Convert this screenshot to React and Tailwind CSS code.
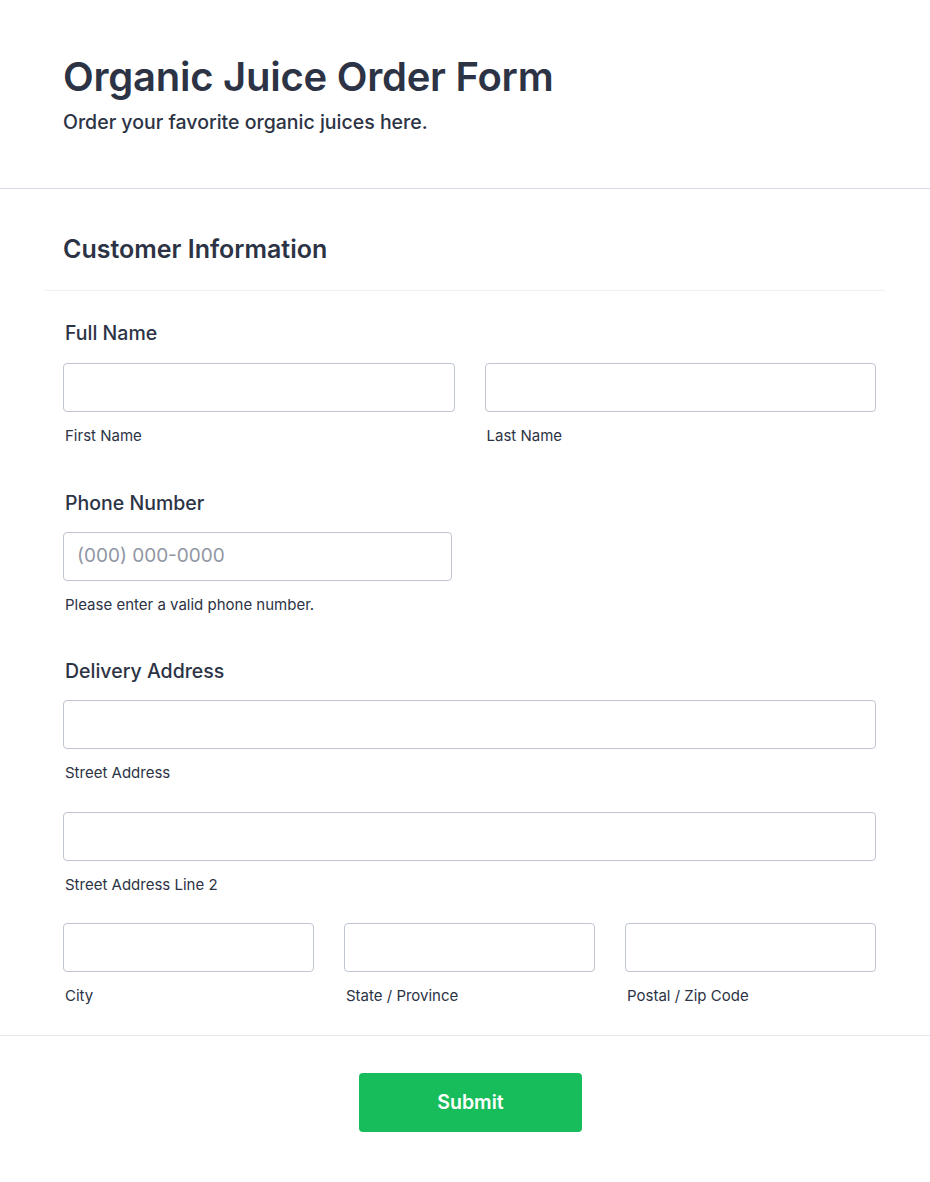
export default function App() {
  const font = { fontFamily: "Inter, 'Noto Sans', sans-serif" };
  const inputCls = "h-[49px] w-full rounded-[4px] border border-[#bfc5d3] bg-white";
  const sub = "mt-[15px] pl-[2px] text-[15px] leading-[18px] text-[#2c3345]";
  const label = "pl-[2px] text-[19.5px] font-medium leading-[22px] text-[#2c3345]";
  return (
    <div className="min-h-[1182px] w-[930px] bg-white" style={font}>
      <header className="border-b border-[#d8dae5] px-[63px] pb-[54px] pt-[53px]">
        <h1 className="text-[40px] font-semibold leading-[48px] tracking-[-0.25px] text-[#2c3345]">Organic Juice Order Form</h1>
        <p className="mt-[9px] text-[19.5px] font-medium leading-[24px] text-[#2c3345]">Order your favorite organic juices here.</p>
      </header>
      <section className="px-[45px]">
        <div className="border-b border-[#eef0f5] px-[18px] pb-[26px] pt-[45px]">
          <h2 className="text-[25px] font-semibold leading-[30px] text-[#2c3345]">Customer Information</h2>
        </div>
      </section>
      <div className="pb-[30px] pl-[63px] pr-[54px] pt-[31px]">
        <div className={label}>Full Name</div>
        <div className="mt-[19px] grid grid-cols-2 gap-[30px]">
          <div>
            <div className={inputCls} />
            <div className={sub}>First Name</div>
          </div>
          <div>
            <div className={inputCls} />
            <div className={sub}>Last Name</div>
          </div>
        </div>

        <div className={`${label} mt-[47px]`}>Phone Number</div>
        <div className="mt-[18px] w-[389px]">
          <div className={`${inputCls} flex items-center px-[13px] text-[19px] text-[#8f96a3]`}>(000) 000-0000</div>
          <div className={sub}>Please enter a valid phone number.</div>
        </div>

        <div className={`${label} mt-[46px]`}>Delivery Address</div>
        <div className="mt-[18px]">
          <div className={inputCls} />
          <div className={sub}>Street Address</div>
        </div>
        <div className="mt-[30px]">
          <div className={inputCls} />
          <div className={sub}>Street Address Line 2</div>
        </div>
        <div className="mt-[29px] grid grid-cols-3 gap-[30px]">
          <div>
            <div className={inputCls} />
            <div className={sub}>City</div>
          </div>
          <div>
            <div className={inputCls} />
            <div className={sub}>State / Province</div>
          </div>
          <div>
            <div className={inputCls} />
            <div className={sub}>Postal / Zip Code</div>
          </div>
        </div>
      </div>
      <div className="flex justify-center border-t border-[#e6e8ee] pl-[11px] pt-[37px]">
        <button className="h-[59px] w-[223px] rounded-[4px] bg-[#18bd5b] text-[19.5px] font-semibold text-white">Submit</button>
      </div>
    </div>
  );
}
